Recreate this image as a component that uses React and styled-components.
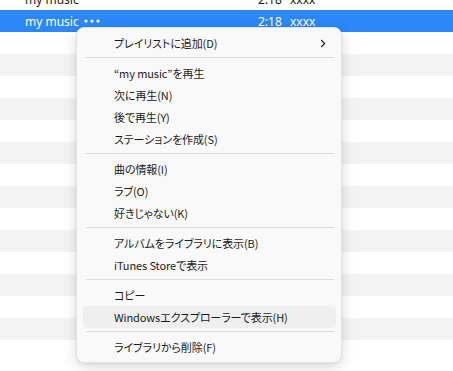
import React from "react";
import styled, { createGlobalStyle } from "styled-components";

const GlobalStyle = createGlobalStyle`
  html, body {
    margin: 0;
    padding: 0;
    background: #ffffff;
    overflow: hidden;
  }
  body {
    font-family: "Noto Sans", "Noto Sans CJK JP", sans-serif;
  }
`;

const Page = styled.div`
  position: relative;
  width: 453px;
  height: 371px;
  overflow: hidden;
  background: #ffffff;
`;

const TrackList = styled.div`
  display: flex;
  flex-direction: column;
  margin-top: -12px;
`;

const Row = styled.div`
  display: flex;
  align-items: center;
  height: 22px;
  padding-left: 25px;
  font-size: 12px;
  color: ${(p) => (p.$selected ? "#ffffff" : "#1a1a1a")};
  background: ${(p) =>
    p.$selected ? "#2b88f6" : p.$odd ? "#f3f3f3" : "#ffffff"};
`;

const Title = styled.div`
  display: flex;
  align-items: center;
  gap: 5px;
  width: 233px;
`;

const Time = styled.div`
  width: 32px;
`;

const Artist = styled.div``;

const Dots = () => (
  <svg width="16" height="4" viewBox="0 0 16 4">
    <circle cx="2" cy="2" r="1.6" fill="#ffffff" />
    <circle cx="8" cy="2" r="1.6" fill="#ffffff" />
    <circle cx="14" cy="2" r="1.6" fill="#ffffff" />
  </svg>
);

const Menu = styled.div`
  position: absolute;
  left: 76px;
  top: 27px;
  width: 266px;
  box-sizing: border-box;
  padding: 4px 5px 4px 6px;
  background: #f9f9f9;
  border: 1px solid #e3e3e3;
  border-radius: 8px;
  box-shadow: 0 4px 14px rgba(0, 0, 0, 0.14), 0 1px 3px rgba(0, 0, 0, 0.06);
  font-family: "Noto Sans CJK JP", "Noto Sans", sans-serif;
  font-feature-settings: "palt";
  font-size: 11px;
  letter-spacing: -0.1px;
  color: #1b1b1b;
`;

const Item = styled.div`
  display: flex;
  align-items: center;
  justify-content: space-between;
  height: 22px;
  padding: 0 10px 0 31px;
  border-radius: 4px;
  background: ${(p) => (p.$hover ? "#efefef" : "transparent")};
  white-space: nowrap;
`;

const Separator = styled.div`
  height: 1px;
  margin: 3px 2px 4px 3px;
  background: #dcdcdc;
`;

const Chevron = () => (
  <svg width="6" height="9" viewBox="0 0 6 9">
    <path d="M1.2 1 L4.6 4.5 L1.2 8" fill="none" stroke="#222" strokeWidth="1.2" />
  </svg>
);

const rows = Array.from({ length: 17 }, (_, i) => i);

const groups = [
  [{ label: "プレイリストに追加(D)", sub: true }],
  [
    { label: "“my music”を再生" },
    { label: "次に再生(N)" },
    { label: "後で再生(Y)" },
    { label: "ステーションを作成(S)" },
  ],
  [{ label: "曲の情報(I)" }, { label: "ラブ(O)" }, { label: "好きじゃない(K)" }],
  [{ label: "アルバムをライブラリに表示(B)" }, { label: "iTunes Storeで表示" }],
  [{ label: "コピー" }, { label: "Windowsエクスプローラーで表示(H)", hover: true }],
  [{ label: "ライブラリから削除(F)" }],
];

export default function App() {
  return (
    <>
      <GlobalStyle />
      <Page>
        <TrackList>
          {rows.map((i) =>
            i < 2 ? (
              <Row key={i} $selected={i === 1} $odd={i % 2 === 1}>
                <Title>
                  my music
                  {i === 1 && <Dots />}
                </Title>
                <Time>2:18</Time>
                <Artist>xxxx</Artist>
              </Row>
            ) : (
              <Row key={i} $odd={i % 2 === 1} />
            )
          )}
        </TrackList>
        <Menu>
          {groups.map((g, gi) => (
            <React.Fragment key={gi}>
              {gi > 0 && <Separator />}
              {g.map((it) => (
                <Item key={it.label} $hover={it.hover}>
                  <span>{it.label}</span>
                  {it.sub && <Chevron />}
                </Item>
              ))}
            </React.Fragment>
          ))}
        </Menu>
      </Page>
    </>
  );
}
